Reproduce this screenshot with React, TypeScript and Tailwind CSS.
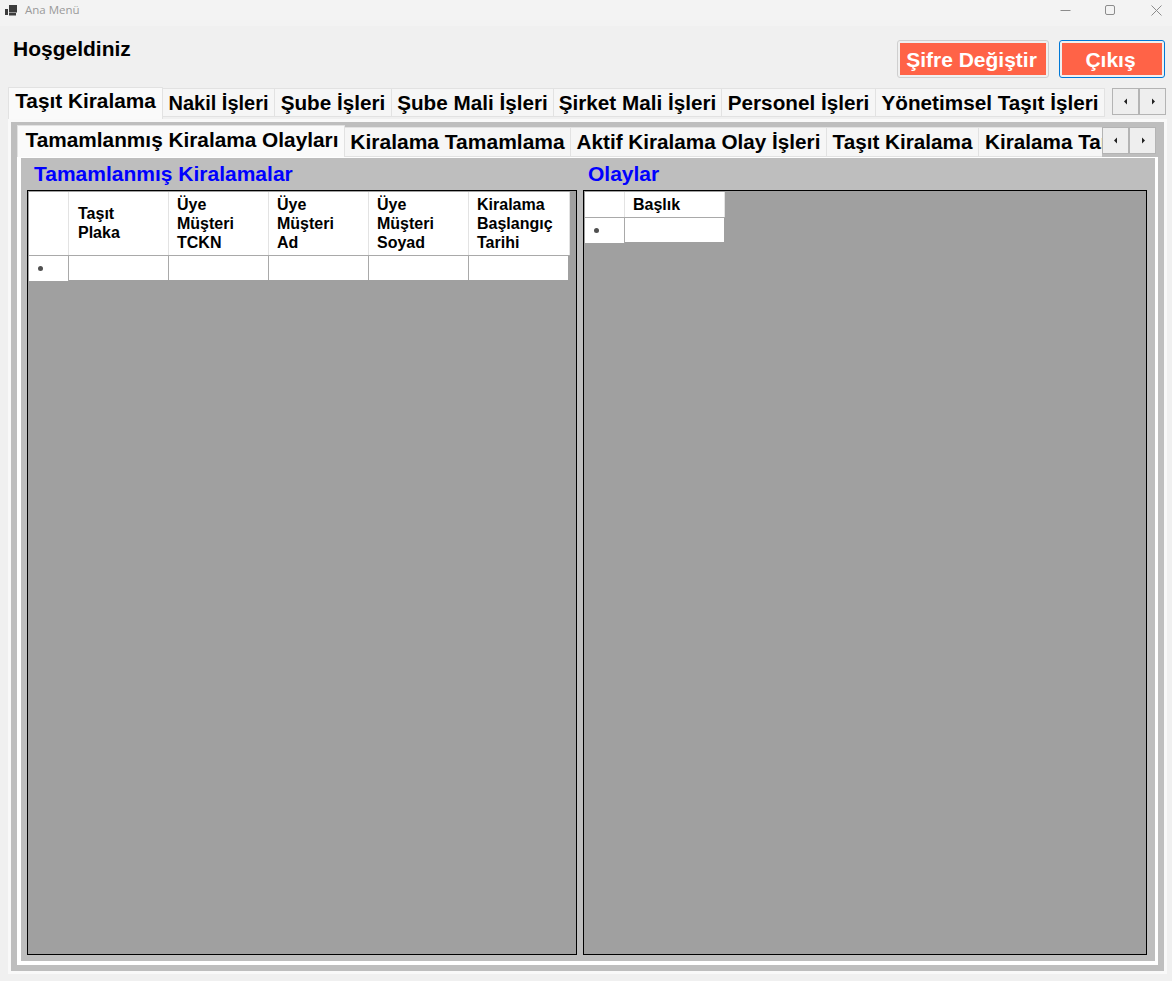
import React from "react";

const font = { fontFamily: '"Liberation Sans", Arial, sans-serif' };

function Arrows({ className }: { className: string }) {
  return (
    <div className={`flex shrink-0 ${className}`}>
      {[0, 1].map((i) => (
        <div key={i} className="w-[27px] h-full bg-[#eeeeee] border border-[#b4b4b4] flex items-center justify-center">
          <svg width="4" height="7" viewBox="0 0 4 7">
            {i === 0 ? <path d="M3 0.5V6.5L0 3.5Z" fill="#222" /> : <path d="M1 0.5V6.5L4 3.5Z" fill="#222" />}
          </svg>
        </div>
      ))}
    </div>
  );
}

function Tab({ w, label, active, h, pad, size }: { w: number; label: string; active?: boolean; h?: string; pad?: string; size?: string }) {
  return (
    <div
      style={{ width: w }}
      className={
        active
          ? `shrink-0 h-[32px] bg-[#fafafa] border border-b-0 border-[#e2e2e2] flex items-center justify-center text-[20.8px] font-bold text-black whitespace-nowrap ${pad ?? "pb-[4px]"} rounded-t-[1px] relative z-10`
          : `shrink-0 ${h ?? "h-[29px]"} bg-[#f6f6f6] border-r border-b border-t border-[#e2e2e2] flex items-center justify-center ${size ?? "text-[20.7px]"} font-bold text-black whitespace-nowrap overflow-hidden`
      }
    >
      {label}
    </div>
  );
}

function HeaderCell({ w, lines, shift }: { w: number; lines: string[]; shift?: string }) {
  return (
    <div style={{ width: w }} className={`shrink-0 h-full bg-white border-r border-[#e3e3e3] ${shift ?? "pl-[8px]"} flex flex-col justify-center text-[16px] leading-[19px] font-bold text-black`}>
      {lines.map((l) => (
        <div key={l}>{l}</div>
      ))}
    </div>
  );
}

function RowHeader() {
  return (
    <div className="w-[40px] shrink-0 h-[25px] bg-white border-r border-[#a9a9a9] flex items-center pl-[9px]">
      <span className="w-[5px] h-[5px] rounded-full bg-[#505050]" />
    </div>
  );
}

export default function App() {
  const left: [number, string[], string?][] = [
    [100, ["Taşıt", "Plaka"], "pl-[9px] pb-[2px]"],
    [100, ["Üye", "Müşteri", "TCKN"]],
    [100, ["Üye", "Müşteri", "Ad"]],
    [100, ["Üye", "Müşteri", "Soyad"]],
    [101, ["Kiralama", "Başlangıç", "Tarihi"]],
  ];
  return (
    <div style={font} className="w-[1172px] h-[981px] bg-[#f0f0f0] flex flex-col overflow-hidden">
      {/* Title bar */}
      <div className="h-[26px] bg-[#f3f3f3] flex items-center pl-[5px] pb-[6px] shrink-0">
        <svg width="13" height="11" viewBox="0 0 13 11">
          <rect x="0" y="4" width="3" height="6" fill="#3c3c3c" />
          <rect x="4" y="0" width="8" height="7.5" fill="#3c3c3c" />
          <rect x="4" y="8" width="7" height="2.5" fill="#3c3c3c" />
        </svg>
        <span style={{ fontFamily: '"Open Sans", sans-serif' }} className="ml-[7px] text-[11.5px] text-[#9a9a9a]">Ana Menü</span>
        <div className="ml-auto flex items-center">
          <svg width="11" height="11" viewBox="0 0 11 11" className="mr-[34px]"><path d="M0.5 5.5H10.5" stroke="#8c8c8c" /></svg>
          <svg width="11" height="11" viewBox="0 0 11 11" className="mr-[35px]"><rect x="0.5" y="0.5" width="9" height="9" rx="1.5" fill="none" stroke="#8c8c8c" /></svg>
          <svg width="11" height="11" viewBox="0 0 11 11" className="mr-[10px]"><path d="M0.5 0.5L10.5 10.5M10.5 0.5L0.5 10.5" stroke="#8c8c8c" /></svg>
        </div>
      </div>

      {/* Header */}
      <div className="h-[61px] shrink-0 flex pl-[13px] pr-[7px]">
        <div className="text-[21px] font-bold text-black leading-[23px] mt-[11px]">Hoşgeldiniz</div>
        <div className="ml-auto flex gap-[10px] mt-[14px]">
          <div className="w-[152px] h-[38px] bg-[#ff6347] border-[3px] border-[#f0f0f0] outline outline-1 -outline-offset-1 outline-[#cfcfcf] rounded-[3px] flex items-center justify-center text-white text-[21px] font-bold pt-[1px] pr-[3px]">Şifre Değiştir</div>
          <div className="w-[106px] h-[38px] bg-[#ff6347] border-[3px] border-[#f0f0f0] outline outline-1 -outline-offset-1 outline-[#0078d7] rounded-[3px] flex items-center justify-center text-white text-[21px] font-bold pt-[1px] pr-[3px]">Çıkış</div>
        </div>
      </div>

      {/* Outer tabs */}
      <div className="h-[32px] shrink-0 flex items-start pl-[8px]">
        <Tab w={155} label="Taşıt Kiralama" active pad="pb-[5px]" />
        <div className="flex mt-[1px]">
          <Tab w={112} label="Nakil İşleri" size="text-[20px]" />
          <Tab w={117} label="Şube İşleri" />
          <Tab w={162} label="Şube Mali İşleri" />
          <Tab w={168} label="Şirket Mali İşleri" />
          <Tab w={154} label="Personel İşleri" />
          <Tab w={229} label="Yönetimsel Taşıt İşleri" />
        </div>
        <Arrows className="h-[27px] ml-[7px] mt-[1px]" />
      </div>

      {/* Outer page */}
      <div className="ml-[8px] w-[1159px] h-[855px] border-[3px] border-[#f9f9f9] bg-[#bebebe] px-[6px] pt-[3px] pb-[6px] flex flex-col">
        {/* Inner tabs */}
        <div className="h-[32px] shrink-0 flex items-start">
          <Tab w={328} label="Tamamlanmış Kiralama Olayları" active pad="pb-[4px] pl-[2px]" />
          <div className="flex mt-[2px] w-[757px] overflow-hidden">
            <Tab w={226} label="Kiralama Tamamlama" h="h-[30px]" size="text-[21px]" />
            <Tab w={256} label="Aktif Kiralama Olay İşleri" h="h-[30px]" />
            <Tab w={152} label="Taşıt Kiralama" h="h-[30px]" />
            <div className="w-[123px] shrink-0 h-[30px] bg-[#f6f6f6] border-t border-b border-[#e2e2e2] pl-[6px] flex items-center text-[20.7px] font-bold text-black whitespace-nowrap overflow-hidden">Kiralama Tamamlama</div>
          </div>
          <Arrows className="h-[27px] mt-[2px]" />
        </div>

        {/* Inner page */}
        <div className="flex-1 border-[3px] border-t border-l-[4px] border-b-[4px] border-white bg-[#bebebe] flex gap-[6px] pl-[6px] pr-[7px] pb-[6px]">
          {/* Left */}
          <div className="w-[550px] shrink-0 flex flex-col">
            <div className="h-[32px] shrink-0 pl-[7px] flex items-center text-[21px] font-bold text-[#0000ff]">Tamamlanmış Kiralamalar</div>
            <div className="flex-1 border border-black bg-[#a0a0a0] pt-[1px] pl-[1px]">
              <div className="flex h-[64px] border-b border-[#a9a9a9] w-[541px]">
                <div className="w-[40px] shrink-0 bg-white border-r border-[#e3e3e3]" />
                {left.map(([w, lines, shift], i) => (
                  <HeaderCell key={i} w={w} lines={lines} shift={shift} />
                ))}
              </div>
              <div className="flex h-[25px]">
                <RowHeader />
                {[100, 100, 100, 100, 99].map((w, i) => (
                  <div key={i} style={{ width: w }} className="h-[24px] bg-white border-r border-[#a9a9a9] last:border-r-0" />
                ))}
              </div>
            </div>
          </div>
          {/* Right */}
          <div className="w-[564px] shrink-0 flex flex-col">
            <div className="h-[32px] shrink-0 pl-[5px] flex items-center text-[21px] font-bold text-[#0000ff]">Olaylar</div>
            <div className="flex-1 border border-black bg-[#a0a0a0] pt-[1px] pl-[1px]">
              <div className="flex h-[26px] w-[140px] border-b border-[#a9a9a9]">
                <div className="w-[40px] shrink-0 bg-white border-r border-[#e3e3e3]" />
                <HeaderCell w={100} lines={["Başlık"]} />
              </div>
              <div className="flex h-[25px]">
                <RowHeader />
                <div className="w-[99px] h-[24px] bg-white" />
              </div>
            </div>
          </div>
        </div>
      </div>
    </div>
  );
}
